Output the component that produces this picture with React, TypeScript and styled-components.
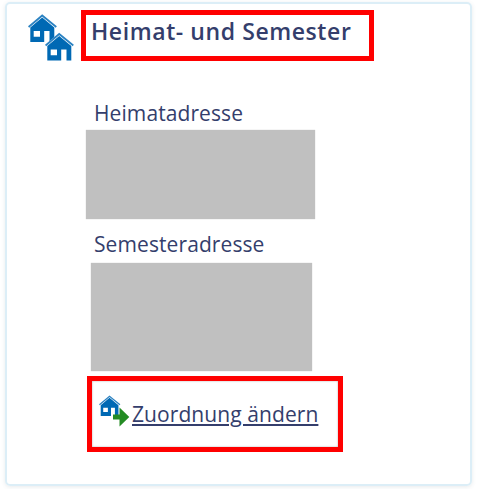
import React from "react";
import styled, { createGlobalStyle } from "styled-components";

const GlobalStyle = createGlobalStyle`
  *, *::before, *::after { box-sizing: border-box; }
  body {
    margin: 0;
    background: #fff;
    color: #343e6c;
    font-family: "Open Sans", "Noto Sans", sans-serif;
  }
`;

const Page = styled.main`
  width: 480px;
  height: 489px;
  padding: 2px 0 0 5px;
  overflow: hidden;
`;

const Card = styled.section`
  width: 467px;
  height: 484px;
  border: 2px solid #dceef7;
  border-radius: 5px;
  box-shadow: 0 1px 4px rgba(60, 80, 100, 0.12);
`;

const Header = styled.header`
  display: flex;
  align-items: flex-start;
  padding: 6px 0 0 21px;
`;

const HousesIcon = styled.svg`
  width: 46px;
  height: 47px;
  margin-top: 4px;
  flex: none;
`;

const Highlight = styled.div<{ $width: number; $height: number }>`
  width: ${(p) => p.$width}px;
  height: ${(p) => p.$height}px;
  border: 5px solid #ff0000;
`;

const TitleFrame = styled(Highlight)`
  margin-left: 7px;
  padding: 0 0 0 5px;
`;

const Title = styled.h2`
  margin: 0;
  font-size: 23px;
  font-weight: 600;
  line-height: 33px;
  letter-spacing: 0.58px;
  white-space: nowrap;
`;

const Content = styled.div`
  padding: 37px 0 0 79px;
`;

const Label = styled.div`
  margin-left: 8px;
  font-size: 21px;
  line-height: 30px;
  letter-spacing: 0.09px;
  white-space: nowrap;
`;

const Redacted = styled.div<{ $width: number; $height: number; $indent: number }>`
  width: ${(p) => p.$width}px;
  height: ${(p) => p.$height}px;
  margin-left: ${(p) => p.$indent}px;
  background: #c0c0c0;
  box-shadow: 0 0 1px #c0c0c0;
`;

const Address = styled.section<{ $labelGap: number; $gap: number }>`
  display: flex;
  flex-direction: column;
  gap: ${(p) => p.$labelGap}px;
  padding-bottom: ${(p) => p.$gap}px;
`;

const ActionFrame = styled(Highlight)`
  display: flex;
  align-items: flex-start;
  margin-left: 1px;
  padding: 14px 0 0 7px;
  box-shadow: inset 0 0 2px rgba(0, 0, 0, 0.35);
`;

const MoveIcon = styled.svg`
  width: 31px;
  height: 33px;
  flex: none;
`;

const ActionLink = styled.a`
  margin-left: 2px;
  margin-top: 4px;
  color: inherit;
  font-size: 21px;
  line-height: 30px;
  letter-spacing: 0.08px;
  white-space: nowrap;
  text-decoration: underline;
  text-decoration-thickness: 1.5px;
  text-underline-offset: 2px;
`;

const House = () => (
  <>
    <path d="M.6 13 14.200 1.500 28.300 13" fill="none" stroke="#2b82c2" strokeWidth="1.800" />
    <path
      d="M14.200 3.500 26.300 13.500v14.500h-4.800V17h-5.300v11H2.300V13.500ZM5.700 17v5.700H12V17Z"
      fill="#0069b4"
      fillRule="evenodd"
    />
  </>
);

export default function App() {
  return (
    <>
      <GlobalStyle />
      <Page>
        <Card>
          <Header>
            <HousesIcon viewBox="0 0 46 47" aria-hidden="true">
              <House />
              <g transform="translate(17 18.500)">
                <path d="M0 12.500 14.200 .6l14.100 12-1.500 2V28H1.800V14Z" fill="#fff" />
                <House />
              </g>
            </HousesIcon>
            <TitleFrame $width={293} $height={51}>
              <Title>Heimat- und Semester</Title>
            </TitleFrame>
          </Header>
          <Content>
            <Address $labelGap={2} $gap={10}>
              <Label>Heimatadresse</Label>
              <Redacted $width={229} $height={89} $indent={0} />
            </Address>
            <Address $labelGap={4} $gap={5}>
              <Label>Semesteradresse</Label>
              <Redacted $width={221} $height={108} $indent={5} />
            </Address>
            <ActionFrame $width={256} $height={76}>
              <MoveIcon viewBox="0 0 31 33" aria-hidden="true">
                <g transform="translate(0 .2) scale(.74)"><House /></g>
                <path d="M14 19.500h6.500V12.500l9.800 9.500-9.800 9.500v-7H14Z" fill="#248b24" />
              </MoveIcon>
              <ActionLink href="#">Zuordnung ändern</ActionLink>
            </ActionFrame>
          </Content>
        </Card>
      </Page>
    </>
  );
}
